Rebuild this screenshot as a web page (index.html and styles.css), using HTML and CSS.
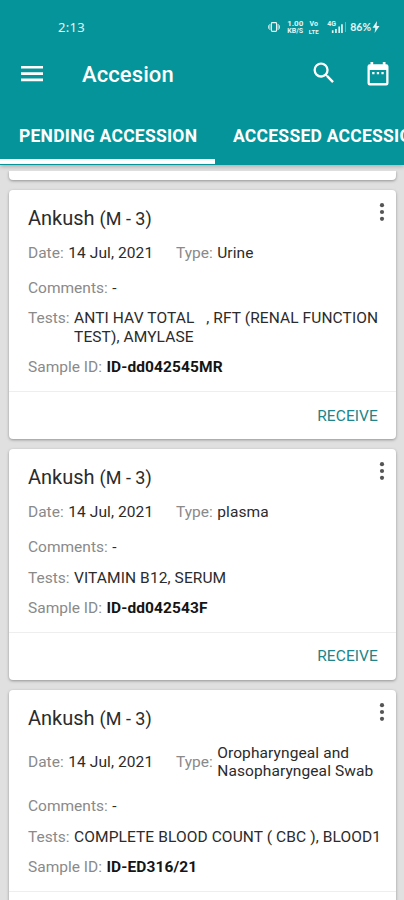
FILE: index.html
```html
<!DOCTYPE html>
<html lang="en">
<head>
    <meta charset="UTF-8">
    <meta name="viewport" content="width=device-width, initial-scale=1.0">
    <title>Accesion</title>
    <link rel="stylesheet" href="styles.css">
</head>
<body>
    <header class="header">
        <div class="status-bar">
            <span class="clock">2:13</span>
            <div class="status-icons">
                <svg class="vibrate" width="12" height="12" viewBox="0 0 14 12" fill="none" stroke="currentColor">
                    <rect x="4" y="1" width="6" height="10" rx="1" stroke-width="1.4"/>
                    <path d="M2.2 2.5v7M.5 4v4M11.8 2.5v7M13.5 4v4"/>
                </svg>
                <span class="stack speed"><b>1.00</b><small>KB/S</small></span>
                <span class="stack volte"><b>Vo</b><small>LTE</small></span>
                <span class="signal">
                    <span class="net">4G</span>
                    <svg width="13" height="13" viewBox="0 0 14 13" fill="currentColor">
                        <path d="M2 9.5h1.8v3H2zM5.5 8h1.8v4.5H5.5zM9 5.5h1.8v7H9zM12 3h1.8v9.5H12z"/>
                    </svg>
                </span>
                <span class="separator"></span>
                <span class="battery">86%</span>
                <svg class="bolt" width="8" height="12" viewBox="0 0 8 12" fill="currentColor">
                    <path d="M5 0L.5 6.8h2.8L2.6 12 7.5 5H4.6z"/>
                </svg>
            </div>
        </div>

        <div class="toolbar">
            <svg class="menu-icon" width="22" height="16" viewBox="0 0 22 16" fill="currentColor">
                <path d="M0 0h22v2.6H0zM0 6.3h22v2.6H0zM0 12.6h22v2.6H0z"/>
            </svg>
            <h1>Accesion</h1>
            <svg class="search-icon" width="28" height="28" viewBox="0 0 24 24" fill="currentColor">
                <path d="M15.5 14h-.79l-.28-.27A6.47 6.47 0 0 0 16 9.5 6.5 6.5 0 1 0 9.5 16c1.61 0 3.09-.59 4.23-1.57l.27.28v.79l5 4.99L20.49 19l-4.99-5zm-6 0C7.01 14 5 11.99 5 9.5S7.01 5 9.5 5 14 7.01 14 9.5 11.99 14 9.5 14z"/>
            </svg>
            <svg class="calendar-icon" width="22" height="24" viewBox="0 0 22 24" fill="currentColor">
                <path fill-rule="evenodd" d="M3.5 0h2.7v2.3h9.6V0h2.7v2.3h.8A2.2 2.2 0 0 1 21.5 4.5v16.7a2.2 2.2 0 0 1-2.2 2.2H2.7A2.2 2.2 0 0 1 .5 21.2V4.5a2.2 2.2 0 0 1 2.2-2.2h.8zM2.8 8v13h16.4V8z"/>
                <path d="M5.2 10h2.3v2.3H5.2zM9.8 10h2.3v2.3H9.8zM14.4 10h2.3v2.3h-2.3z"/>
            </svg>
        </div>

        <nav class="tabs">
            <a class="tab active">PENDING ACCESSION</a>
            <a class="tab">ACCESSED ACCESSION</a>
        </nav>
    </header>

    <main class="list">
        <div class="card card-scrolled"></div>

        <section class="card">
            <div class="card-body">
                <h2>Ankush <span>(M - 3)</span></h2>
                <div class="row info">
                    <div class="field date"><label>Date:</label><p>14 Jul, 2021</p></div>
                    <div class="field"><label>Type:</label><p>Urine</p></div>
                </div>
                <div class="row field"><label>Comments:</label><p>-</p></div>
                <div class="row field tests"><label>Tests:</label><p>ANTI HAV TOTAL &nbsp; , RFT (RENAL FUNCTION<br>TEST), AMYLASE</p></div>
                <div class="row field"><label>Sample ID:</label><strong>ID-dd042545MR</strong></div>
            </div>
            <div class="card-footer"><a class="receive">RECEIVE</a></div>
            <svg class="more" width="6" height="20" viewBox="0 0 6 20" fill="currentColor">
                <circle cx="3" cy="3.2" r="2.1"/><circle cx="3" cy="10" r="2.1"/><circle cx="3" cy="16.8" r="2.1"/>
            </svg>
        </section>

        <section class="card">
            <div class="card-body">
                <h2>Ankush <span>(M - 3)</span></h2>
                <div class="row info">
                    <div class="field date"><label>Date:</label><p>14 Jul, 2021</p></div>
                    <div class="field"><label>Type:</label><p>plasma</p></div>
                </div>
                <div class="row field"><label>Comments:</label><p>-</p></div>
                <div class="row field tests"><label>Tests:</label><p>VITAMIN B12, SERUM</p></div>
                <div class="row field"><label>Sample ID:</label><strong>ID-dd042543F</strong></div>
            </div>
            <div class="card-footer"><a class="receive">RECEIVE</a></div>
            <svg class="more" width="6" height="20" viewBox="0 0 6 20" fill="currentColor">
                <circle cx="3" cy="3.2" r="2.1"/><circle cx="3" cy="10" r="2.1"/><circle cx="3" cy="16.8" r="2.1"/>
            </svg>
        </section>

        <section class="card">
            <div class="card-body">
                <h2>Ankush <span>(M - 3)</span></h2>
                <div class="row info">
                    <div class="field date"><label>Date:</label><p>14 Jul, 2021</p></div>
                    <div class="field"><label>Type:</label><p>Oropharyngeal and<br>Nasopharyngeal Swab</p></div>
                </div>
                <div class="row field"><label>Comments:</label><p>-</p></div>
                <div class="row field tests"><label>Tests:</label><p>COMPLETE BLOOD COUNT ( CBC ), BLOOD1</p></div>
                <div class="row field"><label>Sample ID:</label><strong>ID-ED316/21</strong></div>
            </div>
            <div class="card-footer"></div>
            <svg class="more" width="6" height="20" viewBox="0 0 6 20" fill="currentColor">
                <circle cx="3" cy="3.2" r="2.1"/><circle cx="3" cy="10" r="2.1"/><circle cx="3" cy="16.8" r="2.1"/>
            </svg>
        </section>
    </main>
</body>
</html>
```

FILE: styles.css
```css
* {
    margin: 0;
    padding: 0;
    box-sizing: border-box;
}

body {
    font-family: Roboto, sans-serif;
    width: 404px;
    height: 900px;
    background: #e0e0e0;
    color: #2b2b2b;
    display: flex;
    flex-direction: column;
    overflow: hidden;
}

.header {
    height: 165px;
    flex: none;
    background: #059499;
    color: white;
    box-shadow: 0 2px 4px rgba(0, 0, 0, 0.2);
}

/* status bar */
.status-bar {
    height: 46px;
    padding: 8px 24px 0 58px;
    display: flex;
    align-items: center;
    justify-content: space-between;
}

.clock {
    font-family: "Noto Sans", sans-serif;
    font-size: 13px;
    letter-spacing: 0.3px;
    opacity: 0.9;
}

.status-icons {
    display: flex;
    align-items: center;
    opacity: 0.9;
}

.stack {
    display: flex;
    flex-direction: column;
    align-items: center;
    font-size: 7px;
    line-height: 8px;
}

.stack small {
    font-size: 6px;
    line-height: 7px;
    font-weight: 700;
}

.speed {
    width: 18px;
    margin-left: 6px;
}

.speed b {
    font-size: 8px;
}

.speed small {
    font-size: 7px;
}

.volte {
    width: 11px;
    margin-left: 4px;
}

.signal {
    display: flex;
    align-items: center;
    margin-left: 8px;
}

.net {
    font-size: 7px;
    font-weight: 700;
    width: 6px;
    margin-top: -6px;
}

.signal svg {
    margin-left: -3px;
}

.separator {
    width: 1px;
    height: 10px;
    margin: 0 4px 0 2px;
    background: rgba(255, 255, 255, 0.4);
}

.battery {
    font-family: Lato, sans-serif;
    font-size: 10.5px;
    font-weight: 700;
}

.bolt {
    margin-left: 1px;
}

/* toolbar */
.toolbar {
    height: 56px;
    padding: 0 15px 0 21px;
    display: flex;
    align-items: center;
}

.menu-icon {
    margin-top: -1px;
}

.toolbar h1 {
    flex: 1;
    margin-left: 39px;
    font-size: 22px;
    font-weight: 500;
    letter-spacing: 0.1px;
}

.search-icon {
    margin: -2px 29px 0 0;
}

/* tabs */
.tabs {
    display: flex;
    height: 62px;
    overflow: hidden;
}

.tab {
    flex: none;
    width: 215px;
    padding: 5px 0 0 19px;
    font-size: 17.5px;
    font-weight: 700;
    line-height: 58px;
    letter-spacing: 0.25px;
    white-space: nowrap;
}

.tab + .tab {
    padding-left: 18px;
}

.tab.active {
    border-bottom: 5px solid white;
}

/* cards */
.list {
    flex: 1;
    min-height: 0;
    margin-top: 6px;
    padding: 0 8px 0 9px;
    display: flex;
    flex-direction: column;
    gap: 9.5px;
    overflow: hidden;
}

.card {
    position: relative;
    flex: none;
    background: white;
    border-radius: 4px;
    box-shadow: 0 1px 3px rgba(0, 0, 0, 0.35);
}

.card-scrolled {
    height: 9px;
    border-radius: 0 0 4px 4px;
}

.card-body {
    padding: 15px 0 14px 19px;
}

.card h2 {
    font-size: 20px;
    font-weight: 400;
    line-height: 26px;
    margin-bottom: 12.3px;
}

.card h2 span {
    font-size: 18px;
}

.row {
    margin-top: 12px;
}

.info {
    display: flex;
    margin-top: 0;
    margin-bottom: 16.5px;
}

.field {
    display: flex;
    font-size: 15.5px;
    line-height: 18.5px;
    white-space: nowrap;
}

.field label {
    color: #8a8a8a;
    margin-right: 4.5px;
}

.field p {
    letter-spacing: 0.1px;
}

.info .field {
    align-items: center;
}

.date {
    width: 148px;
}

.field strong {
    color: #151515;
    font-weight: 700;
    letter-spacing: 0.1px;
}

.card-footer {
    height: 48.5px;
    padding-right: 18px;
    border-top: 1px solid #eeeeee;
    display: flex;
    align-items: center;
    justify-content: flex-end;
}

.receive {
    color: #20858a;
    font-size: 15.5px;
    letter-spacing: 0.1px;
}

.more {
    position: absolute;
    top: 12px;
    right: 11px;
    color: #555555;
}
```
